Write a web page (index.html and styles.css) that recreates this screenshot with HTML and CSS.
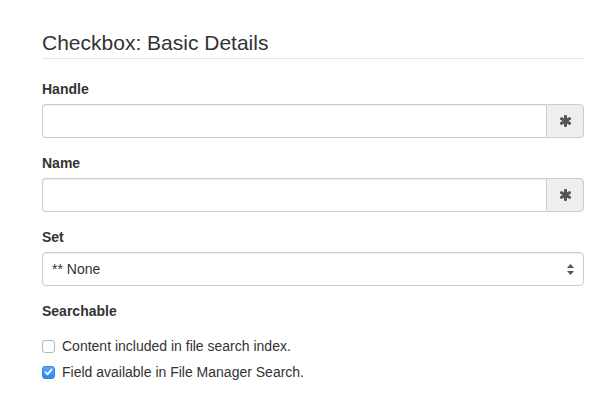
FILE: index.html
```html
<!DOCTYPE html>
<html lang="en">
<head>
    <meta charset="UTF-8">
    <meta name="viewport" content="width=device-width, initial-scale=1.0">
    <title>Checkbox: Basic Details</title>
    <link rel="stylesheet" href="styles.css">
</head>
<body>
    <form class="details">
        <fieldset>
            <legend>Checkbox: Basic Details</legend>
            <div class="form-group">
                <label for="handle">Handle</label>
                <div class="input-group">
                    <input type="text" id="handle" name="handle">
                    <span class="addon">
                        <svg width="11" height="12" viewBox="0 0 22 24">
                            <g fill="#555">
                                <rect x="8" y="0" width="6" height="24" rx="2"/>
                                <rect x="8" y="0" width="6" height="24" rx="2" transform="rotate(60 11 12)"/>
                                <rect x="8" y="0" width="6" height="24" rx="2" transform="rotate(-60 11 12)"/>
                            </g>
                        </svg>
                    </span>
                </div>
            </div>
            <div class="form-group">
                <label for="name">Name</label>
                <div class="input-group">
                    <input type="text" id="name" name="name">
                    <span class="addon">
                        <svg width="11" height="12" viewBox="0 0 22 24">
                            <g fill="#555">
                                <rect x="8" y="0" width="6" height="24" rx="2"/>
                                <rect x="8" y="0" width="6" height="24" rx="2" transform="rotate(60 11 12)"/>
                                <rect x="8" y="0" width="6" height="24" rx="2" transform="rotate(-60 11 12)"/>
                            </g>
                        </svg>
                    </span>
                </div>
            </div>
            <div class="form-group">
                <label for="set">Set</label>
                <div class="select-wrap">
                    <select id="set" name="set">
                        <option value="0">** None</option>
                    </select>
                    <svg class="arrows" width="7" height="11" viewBox="0 0 7 11">
                        <path d="M3.5 0 L7 4 L0 4 Z M3.5 11 L7 7 L0 7 Z" fill="#555"/>
                    </svg>
                </div>
            </div>
            <div class="form-group">
                <label>Searchable</label>
                <div class="checkbox">
                    <label class="check">
                        <span class="box"></span>
                        Content included in file search index.
                    </label>
                </div>
                <div class="checkbox">
                    <label class="check">
                        <span class="box checked">
                            <svg width="9" height="8" viewBox="0 0 9 8">
                                <path d="M1.5 4.2 L3.6 6.3 L7.6 1.5" fill="none" stroke="#fff" stroke-width="1.8" stroke-linecap="round" stroke-linejoin="round"/>
                            </svg>
                        </span>
                        Field available in File Manager Search.
                    </label>
                </div>
            </div>
        </fieldset>
    </form>
</body>
</html>
```

FILE: styles.css
```css
body {
    margin: 0;
    font-family: "Liberation Sans", Arial, sans-serif;
    font-size: 14px;
    line-height: 20px;
    color: #333;
    background: #fff;
}
.details {
    padding: 28px 28px 0 42px;
}
fieldset {
    margin: 0;
    padding: 0;
    border: 0;
}
legend {
    display: block;
    width: 100%;
    padding: 0;
    margin-bottom: 20px;
    font-size: 21px;
    line-height: 30px;
    color: #333;
    border-bottom: 1px solid #e5e5e5;
}
.form-group {
    margin-bottom: 15px;
}
.form-group > label {
    display: block;
    margin-bottom: 5px;
    font-weight: bold;
}
.input-group {
    display: flex;
    height: 34px;
}
.input-group input {
    flex: 1;
    min-width: 0;
    box-sizing: border-box;
    height: 34px;
    margin: 0;
    padding: 6px 12px;
    font: inherit;
    border: 1px solid #ccc;
    border-right: 0;
    border-radius: 4px 0 0 4px;
    box-shadow: inset 0 1px 1px rgba(0, 0, 0, .075);
}
.addon {
    display: flex;
    align-items: center;
    justify-content: center;
    box-sizing: border-box;
    width: 38px;
    background: #eee;
    border: 1px solid #ccc;
    border-radius: 0 4px 4px 0;
}
.select-wrap {
    position: relative;
}
.select-wrap select {
    display: block;
    width: 100%;
    box-sizing: border-box;
    height: 34px;
    margin: 0;
    padding: 6px 10px 6px 9px;
    font: inherit;
    color: #333;
    background: #fff;
    border: 1px solid #ccc;
    border-radius: 4px;
    box-shadow: inset 0 1px 1px rgba(0, 0, 0, .075);
    appearance: none;
    -webkit-appearance: none;
}
.arrows {
    position: absolute;
    right: 10px;
    top: 12px;
    pointer-events: none;
}
.checkbox {
    margin-top: 15px;
    margin-bottom: 10px;
}
.checkbox + .checkbox {
    margin-top: -4px;
}
.check {
    display: flex;
    align-items: center;
    gap: 7px;
    font-weight: normal;
}
.box {
    display: flex;
    align-items: center;
    justify-content: center;
    box-sizing: border-box;
    width: 13px;
    height: 13px;
    border: 1px solid #b5b5b5;
    border-radius: 3px;
    background: #fff;
}
.box.checked {
    border-color: #2d86ee;
    background: linear-gradient(#5aa9fc, #2f86f0);
}
```
